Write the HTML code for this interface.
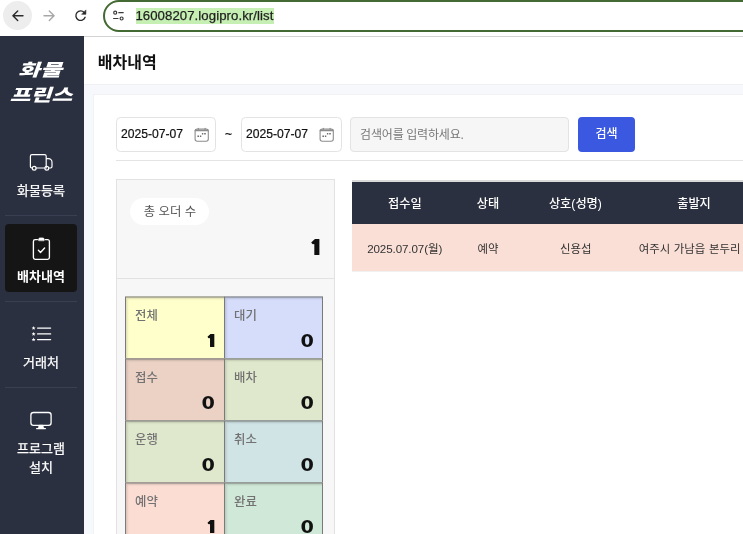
<!DOCTYPE html>
<html lang="ko">
<head>
<meta charset="utf-8">
<title>배차내역</title>
<style>
*{box-sizing:border-box;margin:0;padding:0}
html,body{width:743px;height:534px;overflow:hidden;background:#fff}
body{position:relative;font-family:"Liberation Sans","Noto Sans CJK KR",sans-serif;font-size:12px;color:#333}
#root{position:absolute;left:0;top:0;width:743px;height:534px;overflow:hidden;background:#fff;will-change:transform;transform:translateZ(0)}
.abs{position:absolute}
.kr{font-family:"Liberation Sans","Noto Sans CJK KR",sans-serif;white-space:nowrap}
/* browser chrome */
#chrome{left:0;top:0;width:743px;height:37px;background:#fff;border-bottom:1px solid #d4d4d4}
#back{left:2.7px;top:0.9px;width:29.6px;height:29.6px;border-radius:50%;background:#ededed}
#url{left:102.5px;top:-0.3px;width:700px;height:32px;border:2px solid #436a33;border-radius:16px;background:#fff}
#urlhl{left:136px;top:8px;width:138px;height:15.6px;background:#c6efb4}
#urltxt{left:135.4px;top:8.4px;height:15.5px;line-height:15.5px;font-size:13.2px;letter-spacing:0.07px;color:#1f1f1f;white-space:nowrap;-webkit-text-stroke:0.25px #1f1f1f}
#cicons{left:0;top:0;width:130px;height:32px}
/* sidebar */
#side{left:0;top:36px;width:84px;height:498px;background:#2b3040}
.logo{left:0;width:84px;text-align:center;color:#fff;font-weight:900;font-style:italic;font-size:20px;line-height:24px}
.nav{left:-1px;width:84px;text-align:center;color:#fff;font-weight:400;-webkit-text-stroke:0.25px #fff;font-size:13px;line-height:20px}
.sep{left:5px;width:72px;height:1px;background:#3b3f52}
#active{left:5.2px;top:224.2px;width:71.9px;height:67.4px;border-radius:4px;background:#151515}
#sicons{left:0;top:140px;width:84px;height:300px}
/* main */
#main{left:84px;top:37px;width:659px;height:497px;background:#f7f8fc}
#head{left:84px;top:37px;width:659px;height:47.6px;background:#fff;border-bottom:1px solid #f1f1f4}
#title{left:97.8px;top:51px;font-weight:700;font-size:16px;line-height:24px;color:#111}
#card{left:93.4px;top:94.2px;width:660px;height:450px;background:#fff;border:1px solid #f2f2f4}
.inp{top:117px;height:35px;border:1px solid #e3e3e3;border-radius:4.5px;background:#fff}
.date{top:127.4px;font-size:12.15px;line-height:15px;color:#111;white-space:nowrap;-webkit-text-stroke:0.2px #111}
.cal{top:126.8px;width:16px;height:16px}
#search{left:350px;top:117px;width:219.4px;height:35px;border:1px solid #e3e3e3;border-radius:4px;background:#f6f6f6}
#ph{left:360px;top:126.2px;font-size:12px;line-height:18px;color:#777;word-spacing:-0.6px;letter-spacing:-0.15px}
#btn{left:578px;top:117px;width:57px;height:35px;border-radius:4px;background:#3a58e0;color:#fff;text-align:center;font-weight:500;font-size:12px;line-height:35px}
#hr{left:116px;top:160px;width:640px;height:1px;background:#e4e4e4}
/* stats panel */
#panel{left:116px;top:179px;width:219px;height:380px;background:#f7f7f7;border:1px solid #e2e2e2}
#pdiv{left:116px;top:278px;width:219px;height:1px;background:#e2e2e2}
#pill{left:130px;top:197.5px;width:79px;height:27.6px;border-radius:14px;background:#fff;text-align:center;font-size:12.4px;line-height:29.8px;color:#555;word-spacing:0px;text-indent:1px}
.num{font-family:"NanumGothic","Liberation Sans",sans-serif;font-weight:800;color:#111;text-align:right;white-space:nowrap;transform-origin:100% 50%;width:60px;font-size:16.8px;line-height:22px;text-shadow:-1px 0 #111,1px 0 #111,-0.5px 0 #111,0.5px 0 #111}
.num0{font-family:"DejaVu Sans","Liberation Sans",sans-serif;font-weight:700;color:#111;text-align:right;white-space:nowrap;transform-origin:100% 50%;width:60px;font-size:17.5px;line-height:22px;transform:scaleX(1.1)}
.cell{height:63px;border:1px solid #7a7a7a;transform:translateY(0.45px);box-shadow:inset 1.5px 1.5px 2px rgba(0,0,0,0.13)}
.lab{font-size:12.4px;line-height:20px;color:#727272;font-weight:500;transform:translateY(0.5px)}
/* table */
#ttop{left:352px;top:180px;width:400px;height:2px;background:#d9d9d9}
#thead{left:352px;top:182px;width:400px;height:42px;background:#2b3040}
#trow{left:352px;top:224px;width:400px;height:47px;background:#fadfd6;box-shadow:0 1px 0 #f1f1f1}
.th{top:193.7px;height:20px;line-height:20px;text-align:center;color:#fff;font-weight:500;font-size:12.2px}
.td{top:240.1px;height:18px;line-height:18px;text-align:center;color:#333;font-size:11.4px}
</style>
</head>
<body>
<div id="root">
<div class="abs" id="main"></div>
<div class="abs" id="head"></div>
<div class="abs kr" id="title">배차내역</div>
<div class="abs" id="card"></div>

<div class="abs" id="chrome"></div>
<div class="abs" id="back"></div>
<div class="abs" id="url"></div>
<svg class="abs" id="cicons" viewBox="0 0 130 32" fill="none" stroke-linecap="round" stroke-linejoin="round">
<path d="M23 15.7H12.9M17.7 10.9L12.9 15.7L17.7 20.5" stroke="#2b2b2b" stroke-width="1.4"/>
<path d="M44 15.7H54.1M49.3 10.9L54.1 15.7L49.3 20.5" stroke="#a8a8a8" stroke-width="1.4"/>
<path d="M85.1 17.3A4.75 4.75 0 1 1 84.2 12.5" stroke="#2b2b2b" stroke-width="1.4"/>
<path d="M85.9 10.3V14.3H81.9Z" fill="#2b2b2b" stroke="#2b2b2b" stroke-width="0.6"/>
<circle cx="115.2" cy="12.7" r="1.5" stroke="#3a3a3a" stroke-width="1.2"/>
<path d="M118.8 12.7H123.2M113.6 18.5H118" stroke="#3a3a3a" stroke-width="1.2"/>
<circle cx="121.6" cy="18.5" r="1.5" stroke="#3a3a3a" stroke-width="1.2"/>
</svg>
<div class="abs" id="urlhl"></div>
<div class="abs" id="urltxt">16008207.logipro.kr/list</div>

<div class="abs" id="side"></div>
<div class="abs kr logo" style="top:57.6px;left:-2px;transform:scale(1.19,0.85)">화물</div>
<div class="abs kr logo" style="top:82.7px;left:-0.8px;transform:scale(1.13,0.85)">프린스</div>
<div class="abs" id="active"></div>
<svg class="abs" id="sicons" viewBox="0 140 84 300" fill="none" stroke="#fff" stroke-width="1.2" stroke-linecap="round" stroke-linejoin="round">
<!-- truck -->
<path d="M32.5 168H31.8A1.4 1.4 0 0 1 30.4 166.6V156.2A1.6 1.6 0 0 1 32 154.6H44.6A1.6 1.6 0 0 1 46.2 156.2V168M36 168H44.6M46.2 158.6H48.4A3.6 3.6 0 0 1 52 162.2V166.6A1.4 1.4 0 0 1 50.6 168H48.8"/>
<circle cx="34.2" cy="168.2" r="1.9"/><circle cx="46.8" cy="168.2" r="1.9"/>
<!-- clipboard -->
<path d="M37.4 239.6H35.2A1.8 1.8 0 0 0 33.4 241.4V257.6A1.8 1.8 0 0 0 35.2 259.4H47.6A1.8 1.8 0 0 0 49.4 257.6V241.4A1.8 1.8 0 0 0 47.6 239.6H45.4" stroke-width="1.35"/>
<path d="M38.7 240.3V239.3A1.3 1.3 0 0 1 40 238H42.8A1.3 1.3 0 0 1 44.1 239.3V240.3Z" fill="#fff" stroke-width="0.8"/>
<path d="M38.4 250.3L40.5 252.4L44.6 248.1" stroke-width="1.4"/>
<!-- list -->
<path d="M37.6 328.1H50.6M37.6 333.9H50.6M37.6 339.6H50.6" stroke-width="1.3"/>
<g fill="#fff" stroke="none">
<path id="st" d="M33.6 326.1l.56 1.3 1.4.12-1.06.93.32 1.38-1.22-.73-1.22.73.32-1.38-1.06-.93 1.4-.12z"/>
<path d="M33.6 331.9l.56 1.3 1.4.12-1.06.93.32 1.38-1.22-.73-1.22.73.32-1.38-1.06-.93 1.4-.12z"/>
<path d="M33.6 337.6l.56 1.3 1.4.12-1.06.93.32 1.38-1.22-.73-1.22.73.32-1.38-1.06-.93 1.4-.12z"/>
</g>
<!-- monitor -->
<rect x="30.9" y="412.5" width="20.2" height="12.9" rx="2.6" stroke-width="1.3"/>
<path d="M39 425.6L38.2 428.3H43.8L43 425.6Z" fill="#fff" stroke-width="0.6"/>
<path d="M36.6 428.6H45.4" stroke-width="1.3"/>
</svg>
<div class="abs kr nav" style="top:181px">화물등록</div>
<div class="abs sep" style="top:215px"></div>
<div class="abs kr nav" style="top:267px;font-weight:700;-webkit-text-stroke:0">배차내역</div>
<div class="abs sep" style="top:301px"></div>
<div class="abs kr nav" style="top:353.4px">거래처</div>
<div class="abs sep" style="top:387px"></div>
<div class="abs kr nav" style="top:439.2px">프로그램</div>
<div class="abs kr nav" style="top:458.4px">설치</div>

<div class="abs inp" style="left:116px;width:100px"></div>
<div class="abs date" style="left:121px">2025-07-07</div>
<svg class="abs cal" style="left:193.9px" viewBox="0 0 16 16" fill="none" stroke="#8c8c8c" stroke-linecap="round">
<rect x="1.1" y="2" width="13.2" height="12.2" rx="2.2" stroke-width="1.1"/>
<path d="M1.6 3.4H13.8" stroke-width="1.9"/>
<path d="M4.3 1.3V2.4M11.1 1.3V2.4" stroke-width="1.1"/>
<path d="M7.9 6.8H9.3M10.2 6.8H11.8M3.4 9.2H5M5.9 9.2H7.3" stroke="#6e6e6e" stroke-width="1.4" stroke-linecap="butt"/>
</svg>
<div class="abs date" style="left:225px">~</div>
<div class="abs inp" style="left:241px;width:100.5px"></div>
<div class="abs date" style="left:246px">2025-07-07</div>
<svg class="abs cal" style="left:319.1px" viewBox="0 0 16 16" fill="none" stroke="#8c8c8c" stroke-linecap="round">
<rect x="1.1" y="2" width="13.2" height="12.2" rx="2.2" stroke-width="1.1"/>
<path d="M1.6 3.4H13.8" stroke-width="1.9"/>
<path d="M4.3 1.3V2.4M11.1 1.3V2.4" stroke-width="1.1"/>
<path d="M7.9 6.8H9.3M10.2 6.8H11.8M3.4 9.2H5M5.9 9.2H7.3" stroke="#6e6e6e" stroke-width="1.4" stroke-linecap="butt"/>
</svg>
<div class="abs" id="search"></div>
<div class="abs kr" id="ph">검색어를 입력하세요.</div>
<div class="abs kr" id="btn">검색</div>
<div class="abs" id="hr"></div>

<div class="abs" id="panel"></div>
<div class="abs" id="pdiv"></div>
<div class="abs kr" id="pill">총 오더 수</div>
<div class="abs num" style="left:262.8px;top:234.7px;font-size:20.8px;line-height:26px;text-shadow:-1.1px 0 #111,1.1px 0 #111,-0.5px 0 #111,0.5px 0 #111">1</div>

<div class="abs cell" style="left:125px;top:296px;width:100px;background:#ffffcc"></div>
<div class="abs cell" style="left:224px;top:296px;width:99px;background:#d6ddfb"></div>
<div class="abs cell" style="left:125px;top:358px;width:100px;background:#ebd2c5"></div>
<div class="abs cell" style="left:224px;top:358px;width:99px;background:#dfe8cc"></div>
<div class="abs cell" style="left:125px;top:420px;width:100px;background:#dfe8cc"></div>
<div class="abs cell" style="left:224px;top:420px;width:99px;background:#d0e4e6"></div>
<div class="abs cell" style="left:125px;top:482px;width:100px;background:#fbddd4"></div>
<div class="abs cell" style="left:224px;top:482px;width:99px;background:#d0e8d8"></div>

<div class="abs kr lab" style="left:135px;top:305px">전체</div>
<div class="abs kr lab" style="left:234px;top:305px">대기</div>
<div class="abs kr lab" style="left:135px;top:367px">접수</div>
<div class="abs kr lab" style="left:234px;top:367px">배차</div>
<div class="abs kr lab" style="left:135px;top:429px">운행</div>
<div class="abs kr lab" style="left:234px;top:429px">취소</div>
<div class="abs kr lab" style="left:135px;top:491px">예약</div>
<div class="abs kr lab" style="left:234px;top:491px">완료</div>

<div class="abs num" style="left:157px;top:329.8px">1</div>
<div class="abs num0" style="left:254.4px;top:330.3px">0</div>
<div class="abs num0" style="left:155.4px;top:392.3px">0</div>
<div class="abs num0" style="left:254.4px;top:392.3px">0</div>
<div class="abs num0" style="left:155.4px;top:454.3px">0</div>
<div class="abs num0" style="left:254.4px;top:454.3px">0</div>
<div class="abs num" style="left:157px;top:515.8px">1</div>
<div class="abs num0" style="left:254.4px;top:516.3px">0</div>

<div class="abs" id="ttop"></div>
<div class="abs" id="thead"></div>
<div class="abs" id="trow"></div>
<div class="abs kr th" style="left:354.9px;width:100px">접수일</div>
<div class="abs kr th" style="left:438px;width:100px">상태</div>
<div class="abs kr th" style="left:525.4px;width:100px">상호(성명)</div>
<div class="abs kr th" style="left:644px;width:100px">출발지</div>
<div class="abs kr td" style="left:334.7px;width:140px;font-size:11.6px;letter-spacing:-0.1px">2025.07.07(월)</div>
<div class="abs kr td" style="left:437.9px;width:100px">예약</div>
<div class="abs kr td" style="left:525.7px;width:100px">신용섭</div>
<div class="abs kr td" style="left:619.6px;width:140px;word-spacing:0.5px">여주시 가남읍 본두리</div>
</div>
</body>
</html>
